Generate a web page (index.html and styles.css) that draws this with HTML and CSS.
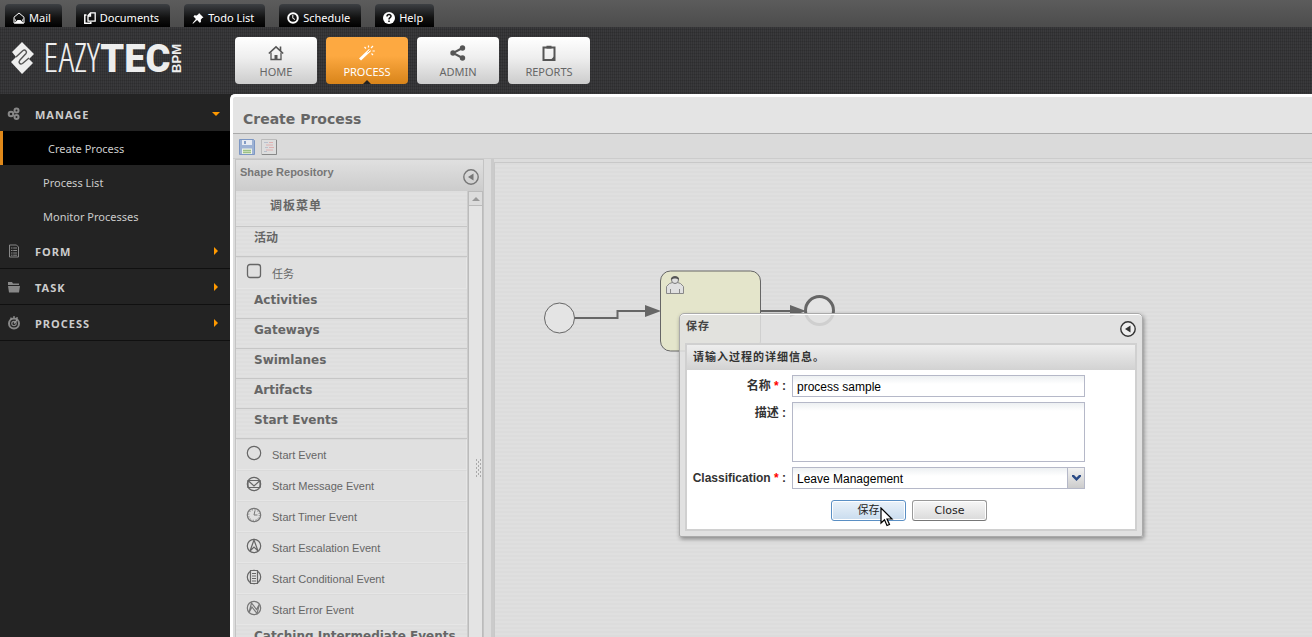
FILE: index.html
```
<!DOCTYPE html>
<html lang="zh-CN">
<head>
<meta charset="utf-8">
<title>Create Process - EazyTec BPM</title>
<link rel="stylesheet" href="styles.css">
</head>
<body>
<nav class="topbar" aria-label="Tools">
  <a class="tab" href="#"><svg width="12" height="12" viewBox="0 0 12 12"><path d="M1 5.200L6 1l5 4.200V11H1z" fill="none" stroke="#fff"/><path d="M1 11.500L4.500 8h3l3.500 3.500zM1 6l2 2v2zM11 6L9 8v2z" fill="#fff"/></svg>Mail</a>
  <a class="tab" href="#"><svg width="12" height="12" viewBox="0 0 12 12"><path d="M2.500 3H.8v8.300h6V10" fill="none" stroke="#fff" stroke-width="1.500"/><path d="M6.500.8h4.700v8.400H4V3.500zV4H4" fill="none" stroke="#fff" stroke-width="1.300"/></svg>Documents</a>
  <a class="tab" href="#"><svg width="12" height="12" viewBox="0 0 12 12"><path d="M7 1l4.500 4.500-1.300.4-1.400 1.800.2 2.200-1.300.8-2.600-2.600L1 11.800l-.5-.5 3.400-4.400-2.400-2.500.9-1.200 2.300.3L6.600 2z" fill="#fff"/></svg>Todo List</a>
  <a class="tab" href="#"><svg width="12" height="12" viewBox="0 0 12 12"><circle cx="6" cy="6" r="4.800" fill="none" stroke="#fff" stroke-width="2"/><path d="M5.800 3v3.300L8 7.500" fill="none" stroke="#fff"/></svg>Schedule</a>
  <a class="tab" href="#"><svg width="12" height="12" viewBox="0 0 12 12"><circle cx="6" cy="6" r="6" fill="#fff"/><path d="M4 4.500C4 1.800 8.200 2 8 4.300 7.900 5.700 6 5.500 6 7.400M6 8.400V10" fill="none" stroke="#111" stroke-width="1.500"/></svg>Help</a>
</nav>
<header class="masthead">
  <a class="logo" href="#" aria-label="EazyTec BPM">
    <svg width="24" height="32" viewBox="0 0 24 32"><path d="M11 0L23 12l-5 5 4 4-11 11L0 20l5-5-4-5z" fill="#eee"/><path d="M5 15l7-6.500c2-1.500 4.500 1 3 3L9 18c-2 2.500 0 5 2.500 3.500L18 16" fill="none" stroke="#555" stroke-width="1.400"/></svg>
    <span class="word">EAZY<b>TEC</b></span><span class="bpm">BPM</span>
  </a>
  <nav class="mainnav" aria-label="Main">
    <a class="tile" href="#"><svg width="16" height="16" viewBox="0 0 16 16"><path d="M0.800 8.500L8 1.800l7.200 6.700M12.500 6V1.500" fill="none" stroke="#555" stroke-width="1.600"/><path d="M3 7.500V14.500h10V7.500" fill="none" stroke="#555" stroke-width="1.300"/><path d="M6.500 10h3v5h-3z" fill="#555"/></svg>HOME</a>
    <a class="tile current" href="#"><svg width="16" height="16" viewBox="0 0 16 16"><path d="M1 14.500L11 5" stroke="#fff" stroke-width="3"/><path d="M8.500 7.300L11 5" stroke="#f8a53c"/><path d="M5.500 2l1.500 1.500M9.500.5v2M14 1l-2 2M13.500 6h2.300M12.500 8.500l1.500 1.500" stroke="#fff" stroke-width="1.200"/></svg>PROCESS</a>
    <a class="tile" href="#"><svg width="16" height="16" viewBox="0 0 16 16"><path d="M12.500 3L3 8l9.500 5" fill="none" stroke="#555" stroke-width="2"/><circle cx="12.500" cy="3" r="2.700" fill="#555"/><circle cx="3" cy="8" r="2.700" fill="#555"/><circle cx="12.500" cy="13" r="2.700" fill="#555"/></svg>ADMIN</a>
    <a class="tile" href="#"><svg width="16" height="16" viewBox="0 0 16 16"><path d="M2.500 2.500h11v12.500h-11z" fill="none" stroke="#555" stroke-width="2"/><path d="M5.500.8h5v2.700h-5zM10 14.500l3-3v3z" fill="#555"/></svg>REPORTS</a>
  </nav>
</header>
<div class="shell">
  <aside class="sidebar">
    <a class="group open" href="#"><svg width="14" height="14" viewBox="0 0 14 14"><g fill="none" stroke="#888"><circle cx="4" cy="7" r="2.300" stroke-width="2"/><circle cx="9.500" cy="3.500" r="2" stroke-width="2"/><circle cx="9.500" cy="10" r="2" stroke-width="2"/></g></svg><span>MANAGE</span><i class="down"></i></a>
    <a class="sub active" href="#">Create Process</a>
    <a class="sub" href="#">Process List</a>
    <a class="sub" href="#">Monitor Processes</a>
    <a class="group" href="#"><svg width="14" height="14" viewBox="0 0 14 14"><path d="M2.500 1h7l2 2v10h-9z" fill="none" stroke="#888"/><path d="M4 4h6M4 6.500h6M4 9h6M4 11.200h6" stroke="#888" stroke-dasharray="1.500 .7 5"/></svg><span>FORM</span><i></i></a>
    <a class="group" href="#"><svg width="14" height="14" viewBox="0 0 14 14"><path d="M1 2h4l1 1.500h6V5H1zM1 6h12l-1 6.500H2z" fill="#888"/></svg><span>TASK</span><i></i></a>
    <a class="group" href="#"><svg width="14" height="14" viewBox="0 0 14 14"><circle cx="7" cy="7.500" r="5" fill="none" stroke="#888" stroke-width="2"/><circle cx="7" cy="7.500" r="2.200" fill="none" stroke="#888" stroke-width="1.200"/><path d="M7 7.500L10 4M4 1.500v2M7 0v2M10 1v2" stroke="#999" stroke-width="1.200"/></svg><span>PROCESS</span><i></i></a>
  </aside>
  <main class="content">
    <h1>Create Process</h1>
    <div class="toolbar">
      <button type="button" aria-label="Save"><svg width="16" height="16" viewBox="0 0 16 16"><path d="M.5.500h14l1 1v14H.5z" fill="#9db2d4" stroke="#7d97c3"/><path d="M3 1h10v5H3z" fill="#e7ebf2"/><path d="M5 2h2v3H5z" fill="#839cc5"/><path d="M3 9.500h10V15H3z" fill="#eef2e6"/><path d="M4 11.500h8M4 13.500h8" stroke="#9cc184" stroke-width="1.300"/></svg></button>
      <button type="button" aria-label="Source"><svg width="16" height="16" viewBox="0 0 16 16"><path d="M.5.500h15v15H.5z" fill="#ddd" stroke="#bbb"/><path d="M1 15.500h14.500V1" fill="none" stroke="#888"/><path d="M3 3.500h4M4 8.500h3M3 12.500h3" stroke="#b9c0cc"/><path d="M8 3.500h4M5 6h7M8 8.500h5M5 11h7" stroke="#dfb0b0"/></svg></button>
    </div>
    <div class="editor">
      <section class="repo">
        <header class="repohead"><h2>Shape Repository</h2><button type="button" aria-label="Collapse"><svg width="16" height="16" viewBox="0 0 16 16"><circle cx="8" cy="8" r="7.200" fill="none" stroke="#777" stroke-width="1.400"/><path d="M10.500 4.500v7L5 8z" fill="#777"/></svg></button></header>
        <div class="repobody">
          <div class="list">
            <h3 class="root">调板菜单</h3>
            <h3>活动</h3>
            <div class="item task"><svg width="18" height="18" viewBox="0 0 18 18"><rect x="2.500" y="1.500" width="13" height="13" rx="2.500" fill="none" stroke="#666" stroke-width="1.300"/></svg>任务</div>
            <h3>Activities</h3><h3>Gateways</h3><h3>Swimlanes</h3><h3>Artifacts</h3><h3>Start Events</h3>
            <div class="item"><svg width="18" height="18" viewBox="0 0 18 18"><circle cx="9" cy="8" r="6.700" fill="none" stroke="#666" stroke-width="1.200"/></svg>Start Event</div>
            <div class="item"><svg width="18" height="18" viewBox="0 0 18 18"><g fill="none" stroke="#666" stroke-width="1.200"><circle cx="9" cy="8" r="6.700"/><path d="M3 4.500h12v7H3zM3 4.500L9 10l6-5.500"/></g></svg>Start Message Event</div>
            <div class="item"><svg width="18" height="18" viewBox="0 0 18 18"><g fill="none" stroke="#777"><circle cx="9" cy="8" r="6.700" stroke-width="1.200"/><circle cx="9" cy="8" r="5.300" stroke-dasharray="1 1.770"/><path d="M10 3.500L9 8h3.500"/></g></svg>Start Timer Event</div>
            <div class="item"><svg width="18" height="18" viewBox="0 0 18 18"><g fill="none" stroke="#666" stroke-width="1.200"><circle cx="9" cy="8" r="6.700"/><path d="M9 2L5 13l4-4 4 4z"/></g></svg>Start Escalation Event</div>
            <div class="item"><svg width="18" height="18" viewBox="0 0 18 18"><g fill="none" stroke="#666" stroke-width="1.200"><circle cx="9" cy="8" r="6.700"/><path d="M5.500 1.500h7v13h-7z" fill="#e0e0e0"/><path d="M7 4.500h4M7 7h4M7 9.500h4M7 12h4"/></g></svg>Start Conditional Event</div>
            <div class="item"><svg width="18" height="18" viewBox="0 0 18 18"><g fill="none" stroke="#777" stroke-width="1.200"><circle cx="9" cy="8" r="6.700"/><path d="M4 12.500L6.500 3l5 6.500L14.500 4 12 13.500 7 7z"/></g></svg>Start Error Event</div>
            <h3>Catching Intermediate Events</h3>
          </div>
          <div class="scroll"><span class="up"></span></div>
        </div>
      </section>
      <div class="splitter"><svg width="7" height="19" viewBox="0 0 7 19"><path d="M1 1h1M5 1h1M3 3h1M1 5h1M5 5h1M3 7h1M1 9h1M5 9h1M3 11h1M1 13h1M5 13h1M3 15h1M1 17h1M5 17h1" stroke="#aaa" stroke-width="2"/></svg></div>
      <section class="canvas" aria-label="Process diagram">
        <svg class="diagram" width="310" height="100" viewBox="540 262 310 100">
          <path d="M574 318h43.500v-7H648M761 311h30" fill="none" stroke="#666" stroke-width="2"/>
          <circle cx="559.500" cy="318" r="15" fill="#e4e4e4" stroke="#666"/>
          <path d="M645 305l16 6-16 6zM790 305l16 6-16 6z" fill="#666"/>
          <rect x="660.500" y="271" width="100" height="80" rx="10" fill="#e4e5cb" stroke="#666"/>
          <path d="M666.500 293.500v-7l3-3 3-1v-3h5v3l3 1 3 3v7zM670.500 289v4M679.500 289v4" fill="#e0e0e0" stroke="#888"/>
          <circle cx="675" cy="280" r="3.500" fill="#e0e0e0" stroke="#777"/><path d="M671 280c-1-5 9-5 8 0-2-2-6-2-8 0z" fill="#555"/>
          <circle cx="819.500" cy="310.500" r="14" fill="#e4e4e4" stroke="#666" stroke-width="3"/>
        </svg>
        <form class="dialog" role="dialog" aria-label="保存">
          <header class="dlghead"><h2>保存</h2><button type="button" aria-label="Collapse"><svg width="16" height="16" viewBox="0 0 16 16"><circle cx="8" cy="8" r="7.200" fill="#eee" stroke="#333" stroke-width="1.400"/><path d="M10.500 4.500v7L5 8z" fill="#333"/></svg></button></header>
          <div class="dlgbody">
            <p class="hint">请输入过程的详细信息。</p>
            <div class="fields">
              <label for="name">名称<em> * </em>:</label><input id="name" type="text" value="process sample">
              <label for="desc">描述 :</label><textarea id="desc"></textarea>
              <label for="cls">Classification<em> * </em>:</label>
              <div class="combo"><select id="cls"><option>Leave Management</option></select><span class="arrow"><svg width="9" height="6" viewBox="0 0 9 6"><path d="M0 0h2l2.500 2.500L7 0h2v1.500L4.500 6 0 1.500z" fill="#2b4b86"/></svg></span></div>
            </div>
            <div class="actions"><button type="button" class="btn primary">保存</button><button type="button" class="btn">Close</button></div>
          </div>
          <svg class="cursor" width="14" height="20" viewBox="0 0 14 20"><path d="M1 1v15l3.500-3.300L7 18.500l2.500-1L7 12h5z" fill="#fff" stroke="#000" stroke-width="1.200"/></svg>
        </form>
      </section>
    </div>
  </main>
</div>
</body>
</html>
```
FILE: styles.css
```
* { box-sizing: border-box; }
body {
  margin: 0;
  height: 100vh;
  display: flex;
  flex-direction: column;
  overflow: hidden;
  background: #222;
  font: 11px/16px "Liberation Sans", "Noto Sans CJK SC", sans-serif;
}
a { color: inherit; text-decoration: none; }
h1, h2, h3, p { margin: 0; }
button { font: inherit; padding: 0; border: 0; background: none; }
svg { display: block; flex: none; }

.topbar {
  flex: none;
  display: flex;
  align-items: flex-end;
  gap: 14px;
  height: 27px;
  padding-left: 5px;
  background: linear-gradient(#5c5c5c, #4c4c4c);
}
.tab {
  display: flex;
  align-items: center;
  gap: 4px;
  height: 23px;
  padding: 4px 11px 0 8px;
  border-radius: 4px 4px 0 0;
  background: linear-gradient(#3d4044, #111 60%, #000);
  color: #fff;
  font: 11px/18px "Noto Sans", sans-serif;
}

.masthead {
  flex: none;
  display: flex;
  align-items: flex-start;
  height: 67px;
  padding-top: 10px;
  background:
    repeating-linear-gradient(90deg, rgba(0,0,0,.14) 0 1px, transparent 1px 2px),
    repeating-linear-gradient(#3a3a3c 0 2px, #343436 2px 3px);
}
.logo { display: flex; align-items: center; width: 235px; height: 42px; padding-left: 11px; color: #eee; }
.word { margin-left: 8px; font: 300 40px/42px "Open Sans Condensed Light", "Roboto Condensed Thin", "Roboto Condensed Light", "Open Sans Condensed", "Roboto Condensed", "Liberation Sans Narrow", sans-serif; }
.word b { font-family: Roboto, sans-serif; font-size: 38px; font-weight: 900; }
.bpm { writing-mode: vertical-rl; transform: rotate(180deg); font: 700 13px/14px "Liberation Sans", sans-serif; }
.mainnav { display: flex; gap: 9px; }
.tile {
  position: relative;
  display: flex;
  flex-direction: column;
  align-items: center;
  gap: 2px;
  width: 82px;
  height: 47px;
  padding-top: 8px;
  border-radius: 4px;
  background: linear-gradient(#fff, #eee 45%, #ccc);
  color: #666;
  font: 11px/18px "Noto Sans", sans-serif;
}
.tile.current { background: linear-gradient(#fda941 40%, #d8841a); color: #fff; }
.tile.current::after {
  content: "";
  position: absolute;
  bottom: 0;
  left: 50%;
  margin-left: -4px;
  border: 4px solid transparent;
  border-top: 0;
  border-bottom-color: #222;
}

.shell { flex: 1; min-height: 0; display: flex; }
.sidebar { flex: none; width: 230px; background: #232323; color: #ccc; padding-top: 1px; }
.group {
  display: flex;
  align-items: center;
  height: 36px;
  padding: 0 10px 0 7px;
  border-bottom: 1px solid #101010;
  font: 700 11px/18px "Noto Sans", sans-serif;
  letter-spacing: 1px;
}
.group.open { border: 0; padding-top: 2px; }
.group svg { margin-right: 14px; }
.group span { flex: 1; padding-top: 2px; }
.group i { width: 4px; margin-right: 2px; border: 4px solid transparent; border-left-color: #f90; border-right: 0; }
.group i.down { width: 8px; margin-right: 0; border: 4px solid transparent; border-top-color: #f90; border-bottom: 0; }
.sub { display: block; height: 34px; padding-left: 43px; font: 11px/36px "Noto Sans", sans-serif; }
.sub.active { border-left: 3px solid #e0891a; padding-left: 45px; background: #000; }

.content {
  flex: 1;
  min-width: 0;
  display: flex;
  flex-direction: column;
  border: solid #fff;
  border-width: 3px 0 0 3px;
  border-top-left-radius: 5px;
  background: #e4e4e4;
}
h1 { height: 37px; padding-left: 10px; border-bottom: 1px solid #aaa; color: #666; font: 700 14px/44px "DejaVu Sans", sans-serif; }
.toolbar { display: flex; gap: 6px; height: 25px; padding: 5px 6px 0; border-bottom: 1px solid #ccc; background: #dadada; }
.toolbar button { align-self: flex-start; }
.editor { flex: 1; min-height: 0; display: flex; padding-left: 2px; background: #dcdcdc; }
.repo { flex: none; display: flex; flex-direction: column; width: 249px; border: 1px solid #c4c4c4; border-bottom: 0; }
.repohead { display: flex; justify-content: space-between; height: 31px; padding: 4px 4px 0; background: linear-gradient(#e0e0e0, #ccc); color: #777; }
.repohead h2 { font: 700 11px/16px "Liberation Sans", sans-serif; }
.repohead button { align-self: flex-start; padding-top: 5px; }
.repobody { flex: 1; min-height: 0; display: flex; }
.list { flex: 1; overflow: hidden; border-right: 1px solid #ccc; background: #e0e0e0; color: #666; }
.list h3 {
  height: 30px;
  padding: 1px 0 0 18px;
  border-bottom: 1px solid #c6c6c6;
  background: repeating-linear-gradient(#dedede 0 2px, #e1e1e1 2px 4px);
  font: 700 12px/20px "DejaVu Sans", "Noto Sans CJK SC", sans-serif;
  white-space: nowrap;
}
.list h3.root { height: 36px; padding-left: 34px; line-height: 28px; letter-spacing: 1px; }
.item { display: flex; gap: 9px; height: 31px; padding: 5px 0 0 8px; border: 1px solid #e6e6e6; border-top-color: #dadada; line-height: 20px; }
.item.task { height: 32px; line-height: 22px; }
.scroll { width: 15px; border: 1px solid #bbb; border-width: 0 1px; background: #e4e4e4; }
.up { display: flex; align-items: center; justify-content: center; height: 15px; border: 1px solid #bbb; border-width: 1px 0; background: #dcdcdc; }
.up::before { content: ""; border: 4px solid transparent; border-top: 0; border-bottom-color: #999; }
.splitter { display: flex; align-items: center; justify-content: flex-end; position: relative; width: 10px; border-right: 3px solid #cbcbcb; }
.splitter svg { position: absolute; right: 9px; top: 300px; }
.canvas {
  position: relative;
  flex: 1;
  margin-top: 3px;
  border: 1px solid #c8c8c8;
  border-width: 1px 0 0 1px;
  background: repeating-linear-gradient(#dcdcdc 0 2px, #dfdfdf 2px 4px);
}
.diagram { position: absolute; left: 45px; top: 99px; }

.dialog {
  position: absolute;
  left: 184px;
  top: 150px;
  width: 464px;
  padding: 0 6px 5px;
  border: 1px solid #aaa;
  border-radius: 5px 5px 2px 2px;
  background: rgba(226,226,226,.85);
  box-shadow: inset 0 1px #fff, 1px 2px 4px rgba(0,0,0,.4);
  color: #333;
}
.dlghead { display: flex; justify-content: space-between; height: 29px; padding-top: 1px; color: #444; }
.dlghead h2 { font: 700 11px/22px "Liberation Sans", "Noto Sans CJK SC", sans-serif; letter-spacing: 1px; }
.dlgbody { border: 2px solid #d0d0d0; margin: 0 -1px; background: #fff; }
.hint { height: 25px; padding-left: 6px; background: linear-gradient(#eee, #d2d2d2); font: 700 11px/25px "Liberation Sans", "Noto Sans CJK SC", sans-serif; letter-spacing: 1px; }
.fields { display: grid; grid-template-columns: 99px 293px; column-gap: 6px; row-gap: 5px; padding-top: 5px; }
.fields label { text-align: right; font: 700 12px/22px "Liberation Sans", "Noto Sans CJK SC", sans-serif; white-space: nowrap; }
.fields em { color: #f00; font-style: normal; }
.fields input, .fields textarea, .combo {
  border: 1px solid #b5b8c8;
  border-radius: 0;
  background: linear-gradient(#edf0f2, #fff 8px);
  color: #000;
  font: 12px/18px "Liberation Sans", sans-serif;
}
.fields input { height: 22px; padding: 1px 4px 0; }
.fields textarea { height: 60px; padding: 1px 4px; resize: none; display: block; }
.combo { display: flex; height: 22px; }
.combo select { flex: 1; appearance: none; border: 0; background: none; padding: 1px 4px 0; color: #000; font: inherit; }
.arrow { display: flex; align-items: center; justify-content: center; width: 17px; border-left: 1px solid #b5b8c8; background: linear-gradient(#f2f2f2, #ccc); }
.actions { display: flex; gap: 6px; padding: 11px 0 8px 144px; }
.btn {
  width: 75px;
  height: 21px;
  border: 1px solid #999;
  border-bottom-color: #777;
  border-radius: 3px;
  background: linear-gradient(#f7f7f7, #dadada);
  box-shadow: inset 0 0 0 1px #fff;
  color: #222;
  font: 11px/19px "DejaVu Sans", "Noto Sans CJK SC", sans-serif;
}
.btn.primary { border-color: #5a8fc4; background: linear-gradient(#eaf2fa, #c9dcee); }
.cursor { position: absolute; left: 200px; top: 193px; }
```
